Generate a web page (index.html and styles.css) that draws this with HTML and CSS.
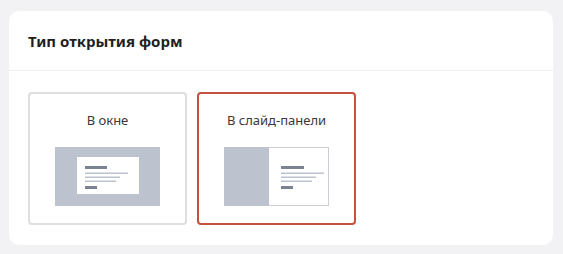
FILE: index.html
```html
<!DOCTYPE html>
<html lang="ru">
<head>
    <meta charset="UTF-8">
    <meta name="viewport" content="width=device-width, initial-scale=1.0">
    <title>Тип открытия форм</title>
    <link rel="stylesheet" href="styles.css">
</head>
<body>

    <!-- Карточка настроек -->
    <div class="card">
        <div class="card-header">Тип открытия форм</div>

        <div class="card-body">
            <!-- Вариант: в окне -->
            <div class="option">
                <div class="option-title">В окне</div>
                <svg class="preview" width="105" height="59" viewBox="0 0 105 59">
                    <rect x="0" y="0" width="105" height="59" fill="#bcc3cf"/>
                    <rect x="22" y="10" width="62" height="37" fill="#fff"/>
                    <rect x="30" y="19" width="22" height="3" fill="#7b8291"/>
                    <rect x="30" y="25.5" width="43" height="1.5" fill="#bcc3cf"/>
                    <rect x="30" y="29.5" width="35" height="1.5" fill="#bcc3cf"/>
                    <rect x="30" y="33.5" width="31" height="1.5" fill="#bcc3cf"/>
                    <rect x="30" y="39" width="12" height="3" fill="#7b8291"/>
                </svg>
            </div>

            <!-- Вариант: в слайд-панели -->
            <div class="option active">
                <div class="option-title">В слайд-панели</div>
                <svg class="preview" width="105" height="59" viewBox="0 0 105 59">
                    <rect x="0.5" y="0.5" width="104" height="58" fill="#fff" stroke="#c9cdd4"/>
                    <rect x="0" y="0" width="45" height="59" fill="#bcc3cf"/>
                    <rect x="57" y="19" width="23" height="3" fill="#7b8291"/>
                    <rect x="57" y="25.5" width="43" height="1.5" fill="#bcc3cf"/>
                    <rect x="57" y="29.5" width="35" height="1.5" fill="#bcc3cf"/>
                    <rect x="57" y="33.5" width="31" height="1.5" fill="#bcc3cf"/>
                    <rect x="57" y="39" width="12" height="3" fill="#7b8291"/>
                </svg>
            </div>
        </div>
    </div>

</body>
</html>
```

FILE: styles.css
```css
body {
    font-family: "Noto Sans", "Open Sans", sans-serif;
    background-color: #f2f1f4;
    margin: 0;
    padding: 11px 10px 9px 9px;
    color: #2b2b2f;
}

.card {
    background-color: #fff;
    border-radius: 10px;
    overflow: hidden;
}

.card-header {
    height: 59px;
    padding: 0 19px;
    display: flex;
    align-items: center;
    font-size: 15px;
    font-weight: 700;
    color: #1f1f23;
    border-bottom: 1px solid #efeef2;
}

.card-body {
    display: flex;
    gap: 10px;
    padding: 21px 19px 20px;
}

.option {
    width: 159px;
    height: 133px;
    box-sizing: border-box;
    border: 2px solid #dedede;
    border-radius: 4px;
    display: flex;
    flex-direction: column;
    align-items: center;
    cursor: pointer;
}

.option.active {
    border-color: #c5513e;
}

.option-title {
    margin-top: 16px;
    font-size: 13px;
    color: #38383d;
    line-height: 20px;
}

.preview {
    display: block;
    margin-top: 17px;
}
```
